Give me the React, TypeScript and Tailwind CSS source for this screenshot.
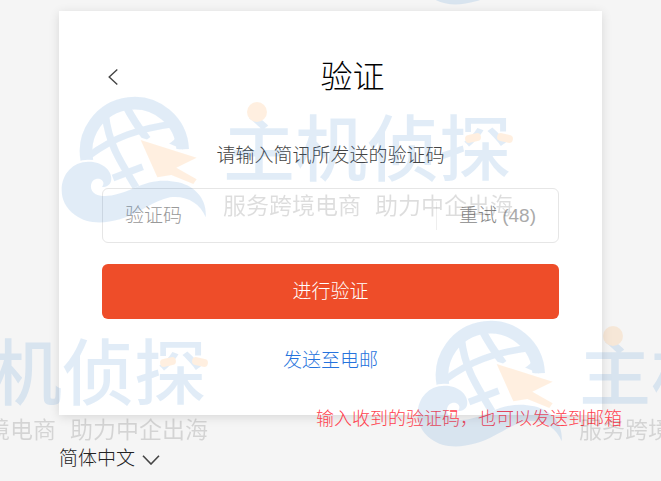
function Globe() {
  return (
    <svg
      viewBox="33 48 438 381"
      className="h-[127px] w-[146px] shrink-0"
      fill="none"
      aria-hidden="true"
    >
      <defs>
        <mask id="globe-cut" maskUnits="userSpaceOnUse" x="0" y="0" width="500" height="500">
          <rect width="500" height="500" fill="#fff" />
          <path
            d="M35 330C35 280 70 245 115 245C150 245 174 264 178 290L160 330L182 350C250 340 320 290 400 312L400 420H60Z"
            fill="#000"
            stroke="#000"
            strokeWidth="12"
          />
          <path d="M272 180L440 233L378 262L322 292Z" fill="#000" stroke="#000" strokeWidth="14" />
        </mask>
      </defs>
      <g mask="url(#globe-cut)" stroke="#2075c9">
        <path d="M111 243A145 145 0 1 1 398 208" strokeWidth="38" />
        <path d="M166 104C176 190 205 235 258 322" strokeWidth="22" />
        <path d="M228 78Q250 122 292 178" strokeWidth="23" />
        <path d="M116 228C190 174 260 146 380 130" strokeWidth="20" />
        <path d="M189 294L278 260" strokeWidth="21" />
        <path d="M384 150Q386 178 364 190L400 206" strokeWidth="6" fill="#2075c9" />
      </g>
      <path
        d="M35 330C35 280 70 245 115 245C155 245 184 268 184 296C184 312 172 322 156 321C168 305 152 293 138 297C118 303 118 332 136 342C162 356 205 345 250 325C300 302 340 297 385 307C440 320 472 362 467 412C450 370 410 346 360 352C310 362 270 400 210 418C160 432 110 432 75 405C48 385 35 360 35 330Z"
        fill="#2075c9"
      />
      <path d="M272 180L440 233L379 263L440 298L430 312L364 285L322 292Z" fill="#ff8c18" />
    </svg>
  );
}

function Watermark({ className }: { className: string }) {
  return (
    <div className={`absolute flex gap-4 whitespace-nowrap opacity-[0.13] ${className}`}>
      <Globe />
      <div className="pt-[18px]">
        <div className="relative text-[72px] leading-[72px] font-medium text-[#2075c9]">
          主机侦探
          <span className="absolute -top-3 left-6 size-5 rounded-full bg-[#ff8c18]" />
          <span className="absolute top-5 right-8 h-2 w-4 -rotate-12 rounded-full bg-[#ff8c18]" />
          <span className="absolute top-5 right-0 h-2 w-4 rotate-12 rounded-full bg-[#ff8c18]" />
        </div>
        <div className="mt-2 flex gap-3.5 text-[23px] leading-6 font-normal text-black">
          <span>服务跨境电商</span>
          <span>助力中企出海</span>
        </div>
      </div>
    </div>
  );
}

export default function App() {
  return (
    <div className="relative min-h-screen overflow-hidden bg-[#f5f5f5] px-[59px] pt-[11px] font-['Liberation_Sans','Noto_Sans_CJK_SC',sans-serif] text-[19px] leading-7 font-light">
      <main className="relative bg-white px-[43px] pt-11 pb-10 shadow-[0_2px_10px_rgba(0,0,0,0.12)]">
        <header className="flex items-center">
          <button type="button" aria-label="返回" className="flex w-11 pl-1.5 text-[#444]">
            <svg viewBox="0 0 10 16" className="h-4 w-2.5" fill="none" stroke="currentColor" strokeWidth="1.4">
              <path d="M9.3 .6L1.2 8L9.3 15.4" />
            </svg>
          </button>
          <h1 className="flex-1 text-center text-[32px] leading-[44px] text-black">验证</h1>
        </header>

        <form onSubmit={(e) => e.preventDefault()}>
          <label htmlFor="code" className="mt-[43px] block text-center text-[#444]">
            请输入简讯所发送的验证码
          </label>
          <div className="mt-[18px] flex h-[55px] items-center rounded-md border border-[#e6e6e6]">
            <input
              id="code"
              type="text"
              inputMode="numeric"
              placeholder="验证码"
              className="h-full min-w-0 flex-1 px-[22px] outline-none placeholder:text-[#999]"
            />
            <button type="button" className="border-l border-[#eee] px-[22px] text-[#888]">
              重试 <span className="font-normal text-[#aaa]">(48)</span>
            </button>
          </div>
          <button
            type="submit"
            className="mt-[21px] block h-[55px] w-full rounded-md bg-[#ee4d29] text-center text-white"
          >
            进行验证
          </button>
        </form>

        <p className="mt-7 text-center">
          <a href="#email" className="text-[#2673dd]">
            发送至电邮
          </a>
        </p>

        <p className="absolute -right-5 -bottom-[18px] text-[18px] whitespace-nowrap text-[#ff424f]">
          输入收到的验证码，也可以发送到邮箱
        </p>
      </main>

      <footer className="mt-[30px] flex items-center">
        <div className="relative">
          <select
            aria-label="语言"
            className="h-7 appearance-none bg-transparent pr-6 text-[#222] outline-none"
          >
            <option>简体中文</option>
          </select>
          <svg
            viewBox="0 0 18 10"
            className="pointer-events-none absolute top-2.5 right-0 h-2.5 w-[18px] text-[#444]"
            fill="none"
            stroke="currentColor"
            strokeWidth="1.6"
          >
            <path d="M1 .8L9 9L17 .8" />
          </svg>
        </div>
      </footer>

      <div
        className="pointer-events-none absolute inset-0 overflow-hidden select-none"
        aria-hidden="true"
      >
        <Watermark className="-top-[122px] -left-[244px]" />
        <Watermark className="-top-[122px] left-[417px]" />
        <Watermark className="top-24 left-[61px]" />
        <Watermark className="top-80 -left-[244px]" />
        <Watermark className="top-80 left-[417px]" />
      </div>
    </div>
  );
}
